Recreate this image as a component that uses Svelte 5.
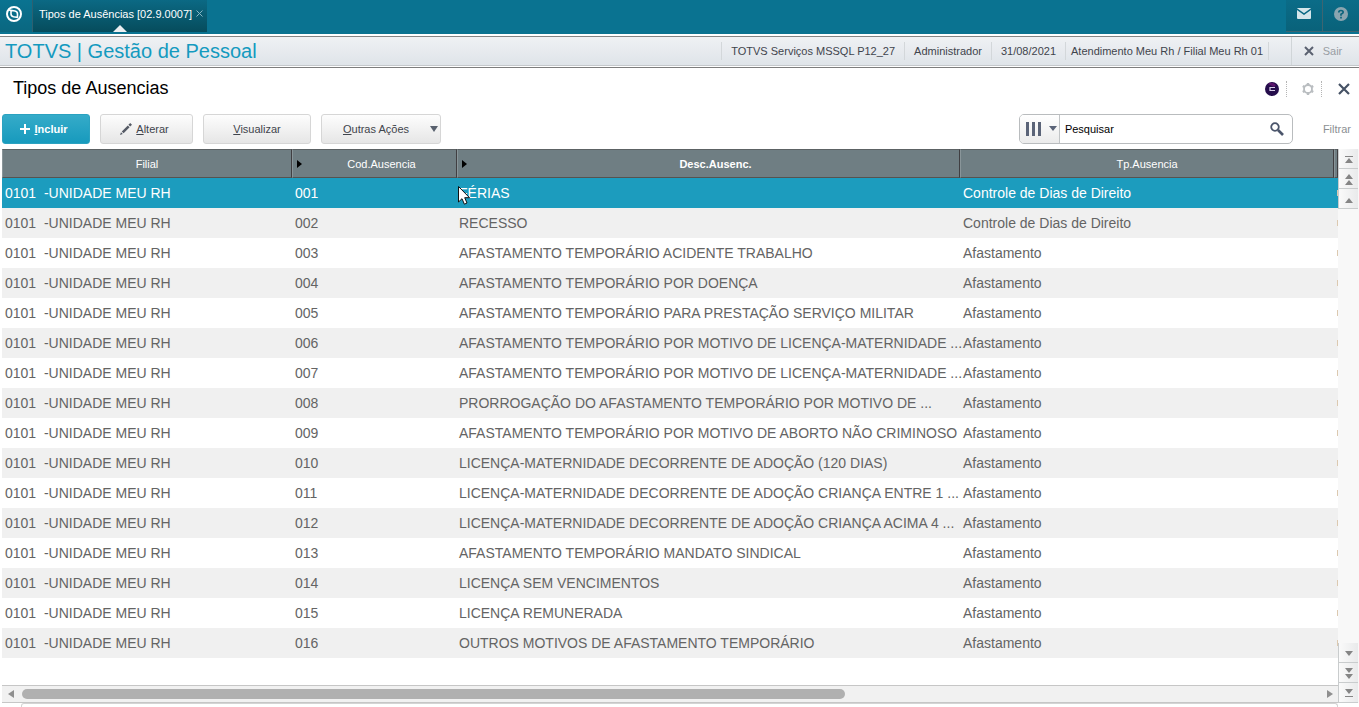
<script>
  const branch = '0101  -UNIDADE MEU RH';
  const direct = 'Controle de Dias de Direito';
  const leave = 'Afastamento';
  const rows = [
    ['001', 'FÉRIAS', direct],
    ['002', 'RECESSO', direct],
    ['003', 'AFASTAMENTO TEMPORÁRIO ACIDENTE TRABALHO', leave],
    ['004', 'AFASTAMENTO TEMPORÁRIO POR DOENÇA', leave],
    ['005', 'AFASTAMENTO TEMPORÁRIO PARA PRESTAÇÃO SERVIÇO MILITAR', leave],
    ['006', 'AFASTAMENTO TEMPORÁRIO POR MOTIVO DE LICENÇA-MATERNIDADE ...', leave],
    ['007', 'AFASTAMENTO TEMPORÁRIO POR MOTIVO DE LICENÇA-MATERNIDADE ...', leave],
    ['008', 'PRORROGAÇÃO DO AFASTAMENTO TEMPORÁRIO POR MOTIVO DE ...', leave],
    ['009', 'AFASTAMENTO TEMPORÁRIO POR MOTIVO DE ABORTO NÃO CRIMINOSO', leave],
    ['010', 'LICENÇA-MATERNIDADE DECORRENTE DE ADOÇÃO (120 DIAS)', leave],
    ['011', 'LICENÇA-MATERNIDADE DECORRENTE DE ADOÇÃO CRIANÇA ENTRE 1 ...', leave],
    ['012', 'LICENÇA-MATERNIDADE DECORRENTE DE ADOÇÃO CRIANÇA ACIMA 4 ...', leave],
    ['013', 'AFASTAMENTO TEMPORÁRIO MANDATO SINDICAL', leave],
    ['014', 'LICENÇA SEM VENCIMENTOS', leave],
    ['015', 'LICENÇA REMUNERADA', leave],
    ['016', 'OUTROS MOTIVOS DE AFASTAMENTO TEMPORÁRIO', leave]
  ];
  const session = ['TOTVS Serviços MSSQL P12_27', 'Administrador', '31/08/2021', 'Atendimento Meu Rh / Filial Meu Rh 01'];
  const upper = [
    ['Primeiro', 'M5 6H13V7H5ZM9 8L13 13H5Z'],
    ['Página acima', 'M9 4L13 9H5ZM9 10L13 15H5Z'],
    ['Acima', 'M9 8L13 13H5Z']
  ];
  const lower = [
    ['Abaixo', 'M5 7H13L9 12Z'],
    ['Página abaixo', 'M5 4H13L9 9ZM5 10H13L9 15Z'],
    ['Último', 'M5 5H13L9 10ZM5 12H13V13H5Z']
  ];
  let selected = $state(0);
  let query = $state('Pesquisar');
</script>

{#snippet steps(list)}
  {#each list as [label, d]}
    <button class="step" aria-label={label}>
      <svg viewBox="0 0 18 18" width="18" height="18"><path {d} fill="#858585" /></svg>
    </button>
  {/each}
{/snippet}

<div class="app">
  <header class="top">
    <button class="home" aria-label="Início">
      <svg viewBox="0 0 18 18" width="18" height="18" fill="none" stroke="#fff">
        <circle cx="9" cy="9" r="7" stroke-width="2" />
        <path d="M4 5L10 6Q12.5 6.5 12.5 9V12.5M6 5.5V9Q6 11 8.5 11.8L13 12.5" stroke-width="1.6" />
      </svg>
    </button>
    <div class="tab">
      <span>Tipos de Ausências [02.9.0007]</span>
      <button class="tab-close" aria-label="Fechar aba">
        <svg viewBox="0 0 7 7" width="7" height="7"><path d="M.5 .5L6.5 6.5M6.5 .5L.5 6.5" stroke="#8bb6c4" /></svg>
      </button>
      <i class="pointer"></i>
    </div>
    <div class="grow"></div>
    <button class="tile mail" aria-label="Mensagens">
      <svg viewBox="0 0 14 11" width="14" height="11"><rect width="14" height="11" rx="1" fill="#d5e6eb" /><path d="M0 1L7 6L14 1" fill="none" stroke="#0a6984" stroke-width="1.5" /></svg>
    </button>
    <button class="tile help" aria-label="Ajuda">
      <svg viewBox="0 0 14 14" width="14" height="14"><circle cx="7" cy="7" r="7" fill="#8aa5b0" /><path d="M4.8 5.5Q4.8 3.5 7 3.5Q9.2 3.5 9.2 5.2Q9.2 6.2 7 7.2V8.7M7 9.8V11.4" fill="none" stroke="#0b647c" stroke-width="1.7" /></svg>
    </button>
  </header>

  <div class="brandbar">
    <div class="brand">TOTVS | Gestão de Pessoal</div>
    <div class="grow"></div>
    {#each session as s}<div class="info">{s}</div>{/each}
    <div class="blank"></div>
    <button class="exit">
      <svg viewBox="0 0 10 10" width="10" height="10"><path d="M1 1L9 9M9 1L1 9" stroke="#5a6170" stroke-width="2" /></svg>
      <span>Sair</span>
    </button>
  </div>

  <main>
    <div class="heading">
      <h1>Tipos de Ausencias</h1>
      <button class="tool" aria-label="Assistente">
        <svg viewBox="0 0 14 14" width="14" height="14"><circle cx="7" cy="7" r="7" fill="#250d4c" /><path d="M3 2Q7-1 11 3L9 5Z" fill="#5b146b" /><path d="M10 5.5H5V8.5H10" fill="none" stroke="#d9cfe8" stroke-width="1.2" /></svg>
      </button>
      <button class="tool gear" aria-label="Configurações">
        <svg viewBox="0 0 14 14" width="14" height="14" fill="none" stroke="#b9bdc0"><circle cx="7" cy="7" r="4" stroke-width="1.8" /><path d="M7 1V3M7 11V13M1.8 4L3.5 5M10.5 9L12.2 10M1.8 10L3.5 9M10.5 5L12.2 4" stroke-width="2.4" /></svg>
      </button>
      <button class="tool close" aria-label="Fechar">
        <svg viewBox="0 0 12 12" width="12" height="12"><path d="M1 1L11 11M11 1L1 11" stroke="#465265" stroke-width="2.2" /></svg>
      </button>
    </div>

    <div class="toolbar">
      <button class="btn primary">
        <svg viewBox="0 0 10 10" width="10" height="10"><path d="M5 0V10M0 5H10" stroke="#fff" stroke-width="2" /></svg>
        <span><u>I</u>ncluir</span>
      </button>
      <button class="btn edit">
        <svg viewBox="0 0 12 12" width="12" height="12"><path d="M0 12L1 9.2L2.8 11ZM1.8 8.4L7.8 2.4L9.6 4.2L3.6 10.2ZM8.4 1.8L10.2 0L12 1.8L10.2 3.6Z" fill="#565b66" /></svg>
        <span><u>A</u>lterar</span>
      </button>
      <button class="btn view"><span><u>V</u>isualizar</span></button>
      <button class="btn more"><span><u>O</u>utras Ações</span>
        <svg viewBox="0 0 8 6" width="8" height="6"><path d="M0 0H8L4 6Z" fill="#59616e" /></svg>
      </button>
      <div class="grow"></div>
      <div class="search">
        <button class="columns" aria-label="Colunas">
          <svg viewBox="0 0 34 14" width="34" height="14" fill="#5b6478"><path d="M1 0H4V14H1ZM7 0H10V14H7ZM13 0H16V14H13ZM24 4H32L28 9Z" /></svg>
        </button>
        <input aria-label="Pesquisar" bind:value={query} />
        <button class="find" aria-label="Buscar">
          <svg viewBox="0 0 14 14" width="14" height="14" fill="none" stroke="#4b556b"><circle cx="5" cy="5" r="3.8" stroke-width="1.8" /><path d="M8 8L13 13" stroke-width="2.6" /></svg>
        </button>
      </div>
      <button class="filter">Filtrar</button>
    </div>

    <div class="grid">
      <div class="pane">
        <table>
          <colgroup><col class="c1" /><col class="c2" /><col class="c3" /><col /><col class="c5" /></colgroup>
          <thead>
            <tr>
              <th>Filial</th>
              <th class="mark">Cod.Ausencia</th>
              <th class="mark sorted">Desc.Ausenc.</th>
              <th>Tp.Ausencia</th>
              <th></th>
            </tr>
          </thead>
          <tbody>
            {#each rows as [code, desc, type], i}
              <tr class:selected={i === selected} onclick={() => (selected = i)}>
                <td>{branch}</td>
                <td>{code}</td>
                <td class="desc">{desc}{#if i === 0}<svg class="cursor" viewBox="0 0 12 19" width="12" height="19"><path d="M.5 .5V16L4 12.7L6.4 18.2L9 17L6.7 11.7H11.5Z" fill="#fff" stroke="#111" /></svg>{/if}</td>
                <td class="type">{type}</td>
                <td class="edge"></td>
              </tr>
            {/each}
          </tbody>
        </table>
        <div class="hscroll">
          <button aria-label="Esquerda"><svg viewBox="0 0 6 8" width="6" height="8"><path d="M6 0V8L0 4Z" fill="#8f8f8f" /></svg></button>
          <div class="track"><div class="thumb"></div></div>
          <button aria-label="Direita"><svg viewBox="0 0 6 8" width="6" height="8"><path d="M0 0V8L6 4Z" fill="#8f8f8f" /></svg></button>
        </div>
      </div>
      <div class="vscroll">
        {@render steps(upper)}
        <div class="grow"></div>
        {@render steps(lower)}
      </div>
    </div>
    <div class="footer"></div>
  </main>
</div>

<style>
  :global(body) { margin: 0; background: #fff; }
  .app { font: 11px/14px "Liberation Sans", Arial, sans-serif; color: #3f444c; height: 100vh; display: flex; flex-direction: column; overflow: hidden; }
  button { font: inherit; color: inherit; border: 0; padding: 0; margin: 0; background: none; display: flex; align-items: center; justify-content: center; }
  svg { display: block; flex: none; }
  .grow { flex: 1; }

  .top { display: flex; height: 34px; background: #0a7391; flex: none; }
  .home { width: 33px; padding: 0 5px 4px 0; box-sizing: border-box; background: linear-gradient(#0a7391, #0a6780); border-right: 1px solid #2d6070; height: 32px; }
  .tab { position: relative; display: flex; align-items: center; gap: 4px; height: 32px; padding: 0 4px 4px 6px; box-sizing: border-box; color: #fff; background: linear-gradient(#0b6984, #064c5c); }
  .tab-close { align-self: flex-start; padding-top: 10px; }
  .pointer { position: absolute; left: 80px; bottom: 0; border: 7px solid transparent; border-top: 0; border-bottom: 7px solid #eceff1; }
  .tile { width: 37px; height: 32px; padding-bottom: 4px; box-sizing: border-box; background: linear-gradient(#0b6c88, #09627a); border-bottom: 1px solid #3d6571; }
  .mail { border-right: 1px solid #3d6571; }
  .help { width: 36px; }

  .brandbar { display: flex; align-items: center; margin-top: 2px; height: 28px; flex: none; border-top: 1px solid #858585; border-bottom: 1px solid #c4c8cb; background: linear-gradient(#eff1f4, #dfe4e9); position: relative; }
  .brandbar::after { content: ""; position: absolute; left: 0; right: 0; top: 30px; height: 1px; background: #7d7d7d; }
  .brand { font-size: 20px; line-height: 24px; color: #149abf; padding-left: 5px; }
  .info { border-left: 1px solid #d3d7da; padding: 2px 9px; height: 14px; }
  .info:nth-last-of-type(2) { padding: 2px 5px; }
  .blank { width: 22px; height: 18px; border-left: 1px solid #d3d7da; }
  .exit { height: 28px; width: 68px; gap: 9px; border-left: 1px solid #d0d5d8; color: #989da3; padding-right: 5px; box-sizing: border-box; }

  main { flex: 1; display: flex; flex-direction: column; min-height: 0; padding-top: 2px; }
  .heading { display: flex; align-items: center; height: 44px; padding: 0 0 3px 13px; box-sizing: border-box; flex: none; }
  h1 { margin: 0; flex: 1; font-size: 18px; line-height: 22px; padding-bottom: 2px; font-weight: 400; color: #000; }
  .tool { width: 28px; height: 16px; }
  .tool + .tool { border-left: 1px dotted #b5b5b5; }
  .gear { width: 35px; padding-left: 8px; }
  .close { width: 38px; padding-left: 7px; }

  .toolbar { display: flex; align-items: center; gap: 10px; padding: 2px 8px 5px 2px; flex: none; }
  .btn { height: 30px; box-sizing: border-box; border: 1px solid #d6d6d6; border-radius: 3px; background: linear-gradient(#fdfdfd, #e6e6e6); gap: 4px; }
  .primary { width: 88px; padding-right: 4px; background: linear-gradient(#35abc9, #179abd); border-color: #2ba2c0; color: #fff; font-weight: 700; }
  .edit { width: 93px; padding-right: 4px; }
  .view { width: 108px; }
  .more { width: 120px; gap: 21px; padding-left: 19px; }
  .search { width: 274px; height: 30px; box-sizing: border-box; display: flex; border: 1px solid #b9bcbe; border-radius: 5px; overflow: hidden; }
  .columns { width: 40px; border-right: 1px solid #c1c4c6; background: linear-gradient(#fff, #ebebeb); padding-left: 6px; box-sizing: border-box; }
  input { flex: 1; min-width: 0; border: 0; outline: 0; padding: 0 5px; font: inherit; color: #000; background: #fff; }
  .find { width: 30px; }
  .filter { margin-left: 20px; color: #8b8f93; }

  .grid { display: flex; flex: 1; min-height: 0; padding-left: 2px; }
  .pane { flex: 1; min-width: 0; display: flex; flex-direction: column; justify-content: space-between; overflow: hidden; }
  table { width: 100%; table-layout: fixed; border-collapse: separate; border-spacing: 0; }
  .c1 { width: 290px; } .c2 { width: 165px; } .c3 { width: 503px; } .c5 { width: 4px; }
  th { height: 29px; box-sizing: border-box; padding: 0; font-weight: 400; color: #fff; background: #6f7e83; border-top: 1px solid #5c6264; border-bottom: 1px solid #555351; border-right: 1px solid #403f42; border-left: 1px solid #899599; position: relative; }
  .sorted { font-weight: 700; }
  .mark { padding-left: 14px; }
  .mark::before { content: ""; position: absolute; left: 4px; top: 10px; border: 4px solid transparent; border-left: 5px solid #000; border-right: 0; }
  td { height: 30px; box-sizing: border-box; padding: 0 0 0 3px; font-size: 14px; line-height: 18px; color: #646464; white-space: pre; position: relative; }
  .desc { padding-left: 2px; }
  .edge::before { content: ""; display: block; height: 6px; border-right: 1px solid #dcc9b0; }
  tbody tr:nth-child(even) { background: #f0f0f0; }
  tbody tr.selected { background: #1c9cbe; }
  tbody tr.selected td { color: #fff; }
  .cursor { position: absolute; left: 1px; top: 8px; }

  .hscroll { display: flex; height: 16px; border-top: 1px solid #c6c6c6; border-bottom: 1px solid #c6c6c6; background: #f1f1f1; align-items: center; }
  .hscroll button { width: 17px; height: 16px; }
  .track { flex: 1; margin: 0 1px 0 3px; }
  .thumb { width: 63.4%; height: 10px; border-radius: 5px; background: #b0b0b0; }
  .vscroll { width: 21px; display: flex; flex-direction: column; background: #f8f8f8; }
  .step { width: 20px; height: 20px; box-sizing: border-box; border: 1px solid #c9cccd; border-width: 0 0 1px 1px; background: linear-gradient(90deg, #fafafa, #e9eaeb); flex: none; }
  .footer { height: 3px; margin: 0 21px; border: 1px solid #d4d4d4; border-bottom: 0; border-radius: 3px 3px 0 0; flex: none; background: #fff; }
</style>
